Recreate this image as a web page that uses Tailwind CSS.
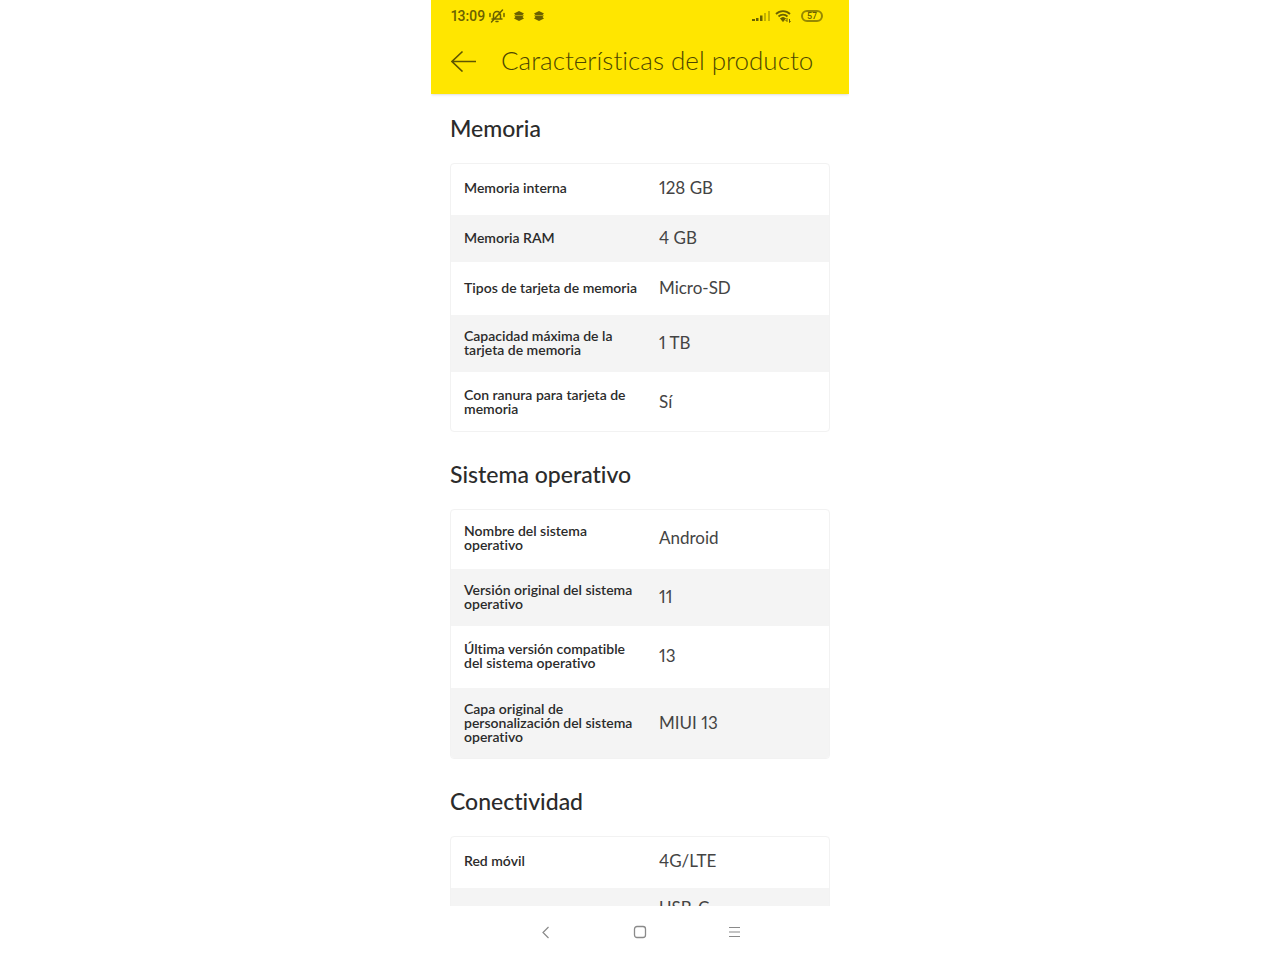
<!DOCTYPE html>
<html lang="es">
<head>
  <meta charset="UTF-8">
  <meta name="viewport" content="width=device-width, initial-scale=1.0">
  <title>Características del producto</title>
  <script src="https://cdn.jsdelivr.net/npm/@tailwindcss/browser@4"></script>
</head>
<body class="bg-white font-['Lato','Liberation_Sans',sans-serif] text-[#2b2b2b] proportional-nums [font-variant-ligatures:none]">
  <div class="mx-auto flex h-screen w-full max-w-[418px] flex-col overflow-hidden">

    <!-- Cabecera -->
    <header class="z-10 bg-[#ffe600] shadow-sm">
      <div class="flex h-8 items-center justify-between pr-[26px] pl-5 text-[#6b6100]">
        <div class="flex items-center">
          <span class="font-['Roboto',sans-serif] text-sm font-medium">13:09</span>
          <svg class="ml-1 h-4 w-4" viewBox="0 0 16 16" fill="none" stroke="currentColor" stroke-width="1.5" stroke-linecap="round">
            <path d="M4.500 11V7a3.500 3.500 0 0 1 7 0v4zM3 11h10M7 13.500h2M2.500 14 13.500 2M1 5.500v3M15 5.500v3"/>
          </svg>
          <svg class="ml-2 h-3 w-3" viewBox="0 0 12 12" fill="currentColor">
            <path d="M6 1 11 3.500 9.500 5h-7L1 3.500zM1 5.500h10L9.500 7 11 8.500 6 11 1 8.500 2.500 7z"/>
          </svg>
          <svg class="ml-2 h-3 w-3" viewBox="0 0 12 12" fill="currentColor">
            <path d="M6 1 11 3.500 9.500 5h-7L1 3.500zM1 5.500h10L9.500 7 11 8.500 6 11 1 8.500 2.500 7z"/>
          </svg>
        </div>
        <div class="flex items-center">
          <svg class="h-3 w-5" viewBox="0 0 20 12" fill="currentColor">
            <path d="M1 9h3v2H1zM5 8h2.500v3H5zM9 5.500h2.500V11H9z"/>
            <path d="M13 3h2v8h-2zM17 1h2v10h-2z" opacity=".4"/>
          </svg>
          <svg class="ml-1 h-4 w-4" viewBox="0 0 16 16" fill="none" stroke="currentColor" stroke-width="1.800">
            <path d="M1 6a10 10 0 0 1 14 0M3.500 8.500a6.500 6.500 0 0 1 9 0"/>
            <path d="M5.500 10.500a4 4 0 0 1 5 0L8 13.500z" fill="currentColor" stroke-width="1"/>
            <path d="M12 10v3.500M10.500 12l1.500 1.500M14.500 11v3.500l1-1.500" stroke-width="1"/>
          </svg>
          <span class="ml-2.5 flex h-3 w-[22px] items-center justify-center rounded-full border-2 border-[#6b6100]/70 font-['Roboto',sans-serif] text-[9px] leading-none font-medium">57</span>
        </div>
      </div>
      <div class="flex h-[62px] items-start px-5">
        <button type="button" aria-label="Volver" class="mt-4">
          <svg class="h-6 w-[26px]" viewBox="0 0 26 24" fill="none" stroke="#5f5600" stroke-width="1.600">
            <path d="M25 13.500H1M11.500 3.500 1 13.500l10.500 10"/>
          </svg>
        </button>
        <h1 class="mt-3 ml-6 text-[26px] leading-8 font-light text-[#4d4600]">Características del producto</h1>
      </div>
    </header>

    <!-- Fichas de características -->
    <main class="min-h-0 flex-1 overflow-hidden px-[19px]">
      <section class="pt-[19px]">
        <h2 class="mb-5 text-[23px] leading-[30px] font-medium">Memoria</h2>
        <div class="overflow-hidden rounded border border-[#f2f2f2]">
          <table class="w-full text-left">
            <tbody>
              <tr class="h-[51px]">
                <th scope="row" class="w-[195px] pr-1 pb-[3px] pl-[13px] text-sm leading-[14px] font-semibold">Memoria interna</th>
                <td class="pb-[3px] pl-[13px] text-[17px] leading-5 text-[#444]">128 GB</td>
              </tr>
              <tr class="h-[47px] bg-[#f4f4f4]">
                <th scope="row" class="w-[195px] pr-1 pb-0.5 pl-[13px] text-sm leading-[14px] font-semibold">Memoria RAM</th>
                <td class="pb-0.5 pl-[13px] text-[17px] leading-5 text-[#444]">4 GB</td>
              </tr>
              <tr class="h-[53px]">
                <th scope="row" class="w-[195px] pr-1 pb-0.5 pl-[13px] text-sm leading-[14px] font-semibold">Tipos de tarjeta de memoria</th>
                <td class="pb-0.5 pl-[13px] text-[17px] leading-5 text-[#444]">Micro-SD</td>
              </tr>
              <tr class="h-[57px] bg-[#f4f4f4]">
                <th scope="row" class="w-[195px] pr-1 pb-0.5 pl-[13px] text-sm leading-[14px] font-semibold">Capacidad máxima de la tarjeta de memoria</th>
                <td class="pb-0.5 pl-[13px] text-[17px] leading-5 text-[#444]">1 TB</td>
              </tr>
              <tr class="h-[59px]">
                <th scope="row" class="w-[195px] pr-1 pl-[13px] text-sm leading-[14px] font-semibold">Con ranura para tarjeta de memoria</th>
                <td class="pl-[13px] text-[17px] leading-5 text-[#444]">Sí</td>
              </tr>
            </tbody>
          </table>
        </div>
      </section>

      <section class="pt-[27px]">
        <h2 class="mb-5 text-[23px] leading-[30px] font-medium">Sistema operativo</h2>
        <div class="overflow-hidden rounded border border-[#f2f2f2]">
          <table class="w-full text-left">
            <tbody>
              <tr class="h-[59px]">
                <th scope="row" class="w-[195px] pr-1 pb-[3px] pl-[13px] text-sm leading-[14px] font-semibold">Nombre del sistema operativo</th>
                <td class="pb-[3px] pl-[13px] text-[17px] leading-5 text-[#444]">Android</td>
              </tr>
              <tr class="h-[57px] bg-[#f4f4f4]">
                <th scope="row" class="w-[195px] pr-1 pb-0.5 pl-[13px] text-sm leading-[14px] font-semibold">Versión original del sistema operativo</th>
                <td class="pb-0.5 pl-[13px] text-[17px] leading-5 text-[#444]">11</td>
              </tr>
              <tr class="h-[62px]">
                <th scope="row" class="w-[195px] pr-1 pb-0.5 pl-[13px] text-sm leading-[14px] font-semibold">Última versión compatible del sistema operativo</th>
                <td class="pb-0.5 pl-[13px] text-[17px] leading-5 text-[#444]">13</td>
              </tr>
              <tr class="h-[70px] bg-[#f4f4f4]">
                <th scope="row" class="w-[195px] pr-1 pl-[13px] text-sm leading-[14px] font-semibold">Capa original de personalización del sistema operativo</th>
                <td class="pl-[13px] text-[17px] leading-5 text-[#444]">MIUI 13</td>
              </tr>
            </tbody>
          </table>
        </div>
      </section>

      <section class="pt-[27px]">
        <h2 class="mb-5 text-[23px] leading-[30px] font-medium">Conectividad</h2>
        <div class="overflow-hidden rounded border border-[#f2f2f2]">
          <table class="w-full text-left">
            <tbody>
              <tr class="h-[51px]">
                <th scope="row" class="w-[195px] pr-1 pb-[3px] pl-[13px] text-sm leading-[14px] font-semibold">Red móvil</th>
                <td class="pb-[3px] pl-[13px] text-[17px] leading-5 text-[#444]">4G/LTE</td>
              </tr>
              <tr class="h-[47px] bg-[#f4f4f4]">
                <td></td>
                <td class="pb-2 pl-[13px] text-[17px] leading-5 text-[#444]">USB-C</td>
              </tr>
            </tbody>
          </table>
        </div>
      </section>
    </main>

    <!-- Botones del sistema -->
    <nav class="flex h-[54px] items-center justify-center gap-[54px] bg-white text-[#8a8a8a]">
      <button type="button" aria-label="Atrás" class="flex h-10 w-10 items-center justify-center">
        <svg class="h-4 w-4" viewBox="0 0 16 16" fill="none" stroke="currentColor" stroke-width="1.200">
          <path d="M10.500 2 5 7.500l5.500 5.500"/>
        </svg>
      </button>
      <button type="button" aria-label="Inicio" class="flex h-10 w-10 items-center justify-center">
        <svg class="h-4 w-4" viewBox="0 0 16 16" fill="none" stroke="currentColor" stroke-width="1.300">
          <rect x="2.500" y="1.500" width="11" height="11" rx="2.500"/>
        </svg>
      </button>
      <button type="button" aria-label="Recientes" class="flex h-10 w-10 items-center justify-center">
        <svg class="h-4 w-4" viewBox="0 0 16 16" fill="none" stroke="currentColor" stroke-width="1.200">
          <path d="M3 2.500h11M3 7h11M3 11.500h11"/>
        </svg>
      </button>
    </nav>
  </div>
</body>
</html>
